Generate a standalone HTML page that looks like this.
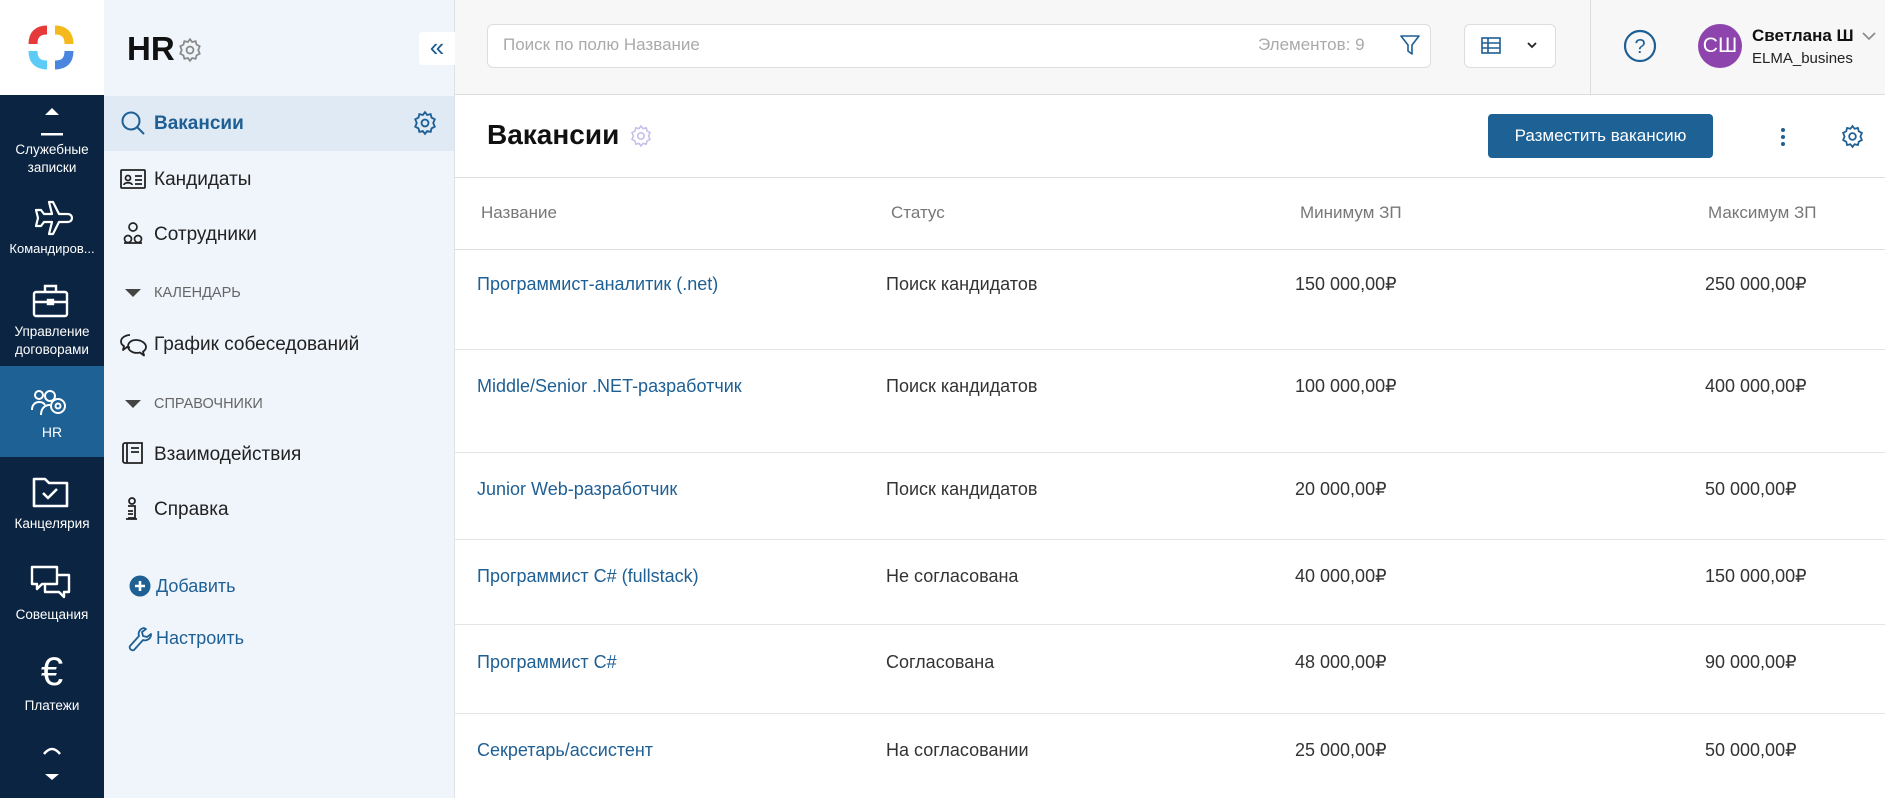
<!DOCTYPE html>
<html><head><meta charset="utf-8"><style>
*{margin:0;padding:0;box-sizing:border-box}
body{width:1885px;height:798px;overflow:hidden;font-family:"Liberation Sans",sans-serif;background:#fff;position:relative;color:#222}
.a{position:absolute;white-space:nowrap}
#rail{left:0;top:0;width:104px;height:798px;background:#0b2441}
#logo{left:0;top:0;width:104px;height:95px;background:#fff}
.ri{position:absolute;left:0;width:104px;text-align:center;color:#fff;font-size:13.5px;line-height:18px}
#side{left:104px;top:0;width:351px;height:798px;background:#f0f5fc;border-right:1px solid #dde2e8}
.nav{position:absolute;left:50px;font-size:19px;color:#222}
.sec{position:absolute;left:50px;font-size:14.5px;color:#666}
#top{left:455px;top:0;width:1430px;height:95px;background:#f7f7f7;border-bottom:1px solid #ddd}
.hl{position:absolute;left:455px;width:1430px;height:1px;background:#e4e4e4}
.cell{position:absolute;font-size:18px;color:#333;white-space:nowrap}
.lnk{color:#1e5f94}
.th{position:absolute;top:203px;font-size:17px;color:#777}
</style></head><body>
<div id="rail" class="a"></div>
<div id="logo" class="a">
<svg width="104" height="95" style="position:absolute;left:0;top:0" viewBox="0 0 104 95">
<g fill="none" stroke-width="9" stroke-linecap="butt">
<path d="M33 44 Q33 30 47 30" stroke="#e63a3a"/>
<path d="M55 30 Q69 30 69 44" stroke="#f6b91d"/>
<path d="M69 51 Q69 65 55 65" stroke="#4a86e0"/>
<path d="M47 65 Q33 65 33 51" stroke="#5ccbf5"/>
</g></svg></div>
<svg class="a" style="left:38px;top:103px" width="28" height="34" viewBox="0 0 28 34"><path d="M7 12 L14 5 L21 12Z" fill="#fff"/><rect x="3" y="30" width="22" height="2.5" fill="#fff"/></svg>
<div class="ri" style="top:141px">Служебные<br>записки</div>
<svg class="a" style="left:31px;top:200px" width="42" height="36" viewBox="0 0 42 36" fill="none" stroke="#fff" stroke-width="2.2" stroke-linejoin="round"><path d="M18 2h4l6 12h9a4 4 0 0 1 0 8h-9l-6 12h-4l3-12h-8l-3 4H5l2-8-2-8h5l3 4h8z"/></svg>
<div class="ri" style="top:240px;font-size:13px">Командиров...</div>
<svg class="a" style="left:32px;top:283px" width="40" height="36" viewBox="0 0 40 36" fill="none" stroke="#fff" stroke-width="2.4"><rect x="2" y="9" width="33" height="24" rx="2"/><path d="M13 9V3h11v6M2 19h33"/><rect x="16" y="17" width="5" height="4" fill="#fff"/></svg>
<div class="ri" style="top:323px">Управление<br>договорами</div>
<div class="a" style="left:0;top:366px;width:104px;height:91px;background:#1e6195"></div>
<svg class="a" style="left:31px;top:388px" width="40" height="30" viewBox="0 0 40 30" fill="none" stroke="#fff" stroke-width="2"><circle cx="8" cy="7" r="4"/><path d="M1 22c0-6 4-8 7-8s5 1 6 3"/><circle cx="19" cy="8" r="5"/><path d="M10 27c0-7 4-10 9-10"/><circle cx="27" cy="18" r="7"/><circle cx="27" cy="18" r="2.5"/></svg>
<div class="ri" style="top:423px;font-size:14px">HR</div>
<svg class="a" style="left:32px;top:476px" width="38" height="32" viewBox="0 0 38 32" fill="none" stroke="#fff" stroke-width="2.6" stroke-linejoin="round"><path d="M2 3h11l4 4h18v23H2z"/><path d="M11 17l5 5 9-9"/></svg>
<div class="ri" style="top:515px">Канцелярия</div>
<svg class="a" style="left:30px;top:565px" width="42" height="36" viewBox="0 0 42 36" fill="none" stroke="#fff" stroke-width="2.4" stroke-linejoin="round"><path d="M2 2h25v17H12l-5 5v-5H2z"/><path d="M27 10h12v17h-5v5l-5-5H15v-8"/></svg>
<div class="ri" style="top:606px">Совещания</div>
<div class="ri" style="top:652px;font-size:40px;line-height:40px;font-weight:300">€</div>
<div class="ri" style="top:697px">Платежи</div>
<svg class="a" style="left:38px;top:742px" width="28" height="40" viewBox="0 0 28 40"><path d="M6 12 Q14 2 22 12" fill="none" stroke="#fff" stroke-width="2.5"/><path d="M7 32h14l-7 6z" fill="#fff"/></svg>

<div id="side" class="a">
<div class="a" style="left:23px;top:30px;font-size:33px;font-weight:bold;color:#111">HR</div>
<svg class="a" style="left:73px;top:37px" width="26" height="26" viewBox="0 0 24 24" fill="none" stroke="#888" stroke-width="1.6"><circle cx="12" cy="12" r="3.2"/><path d="M12 2l2 2.6 3.2-.8.8 3.2L21 8.6 19.6 12 21 15.4l-3 1.6-.8 3.2-3.2-.8L12 22l-2-2.6-3.2.8-.8-3.2L3 15.4 4.4 12 3 8.6 6 7l.8-3.2 3.2.8z"/></svg>
<div class="a" style="left:315px;top:32px;width:36px;height:33px;background:#fff;border-radius:3px 0 0 3px;color:#1e5f94;font-size:26px;line-height:30px;text-align:center">«</div>
<div class="a" style="left:0;top:96px;width:350px;height:55px;background:#dfeaf5"></div>
<svg class="a" style="left:16px;top:110px" width="26" height="26" viewBox="0 0 26 26" fill="none" stroke="#1e5f94" stroke-width="2"><circle cx="11" cy="11" r="8.5"/><path d="M17 17l7 7"/></svg>
<div class="nav" style="top:113px;color:#1e5f94;font-weight:bold">Вакансии</div>
<svg class="a" style="left:308px;top:110px" width="26" height="26" viewBox="0 0 24 24" fill="none" stroke="#1e5f94" stroke-width="1.7"><circle cx="12" cy="12" r="3.2"/><path d="M12 2l2 2.6 3.2-.8.8 3.2L21 8.6 19.6 12 21 15.4l-3 1.6-.8 3.2-3.2-.8L12 22l-2-2.6-3.2.8-.8-3.2L3 15.4 4.4 12 3 8.6 6 7l.8-3.2 3.2.8z"/></svg>
<svg class="a" style="left:16px;top:169px" width="26" height="20" viewBox="0 0 26 20" fill="none" stroke="#222" stroke-width="1.8"><rect x="1" y="1" width="24" height="18" rx="1"/><circle cx="8" cy="9" r="2.5"/><path d="M4 16c0-3 8-3 8 0M15 7h7M15 11h7M15 15h7"/></svg>
<div class="nav" style="top:169px">Кандидаты</div>
<svg class="a" style="left:18px;top:222px" width="22" height="22" viewBox="0 0 22 22" fill="none" stroke="#222" stroke-width="1.7"><circle cx="11" cy="5" r="4"/><circle cx="6" cy="17" r="3.5"/><circle cx="16" cy="17" r="3.5"/><path d="M2 21h18"/></svg>
<div class="nav" style="top:224px">Сотрудники</div>
<div class="a" style="left:21px;top:289px;width:0;height:0;border-left:8px solid transparent;border-right:8px solid transparent;border-top:8px solid #444"></div>
<div class="sec" style="top:285px">КАЛЕНДАРЬ</div>
<svg class="a" style="left:16px;top:333px" width="27" height="24" viewBox="0 0 27 24" fill="none" stroke="#222" stroke-width="1.8" stroke-linejoin="round"><path d="M10 2C5 2 1 5 1 8.5c0 2 1 3.5 3 4.5l-1 4 4-3c1 .3 2 .4 3 .4"/><path d="M16 7c5 0 10 3 10 7 0 2-1 3.5-3 4.5l1 4-4-3c-1 .3-2 .4-3 .4-5 0-9-3-9-6.5S11 7 16 7z"/></svg>
<div class="nav" style="top:334px">График собеседований</div>
<div class="a" style="left:21px;top:400px;width:0;height:0;border-left:8px solid transparent;border-right:8px solid transparent;border-top:8px solid #444"></div>
<div class="sec" style="top:396px">СПРАВОЧНИКИ</div>
<svg class="a" style="left:17px;top:442px" width="24" height="24" viewBox="0 0 24 24" fill="none" stroke="#222" stroke-width="1.8"><path d="M2 3a2 2 0 0 1 2-2h17v20H4a2 2 0 0 1-2-2z"/><path d="M6 1v20M10 6h8M10 10h8"/></svg>
<div class="nav" style="top:444px">Взаимодействия</div>
<svg class="a" style="left:20px;top:497px" width="16" height="24" viewBox="0 0 16 24" fill="none" stroke="#222" stroke-width="1.8"><circle cx="8" cy="4" r="3"/><path d="M4 9h7v12H4M4 14h5M4 17h5M2 22h11"/></svg>
<div class="nav" style="top:499px">Справка</div>
<svg class="a" style="left:25px;top:575px" width="22" height="22" viewBox="0 0 22 22"><circle cx="11" cy="11" r="10.5" fill="#1e5f94"/><path d="M11 6v10M6 11h10" stroke="#fff" stroke-width="2.6"/></svg>
<div class="nav" style="left:52px;top:576px;color:#1e5f94;font-size:18px">Добавить</div>
<svg class="a" style="left:24px;top:626px" width="26" height="28" viewBox="0 0 26 28" fill="none" stroke="#1e5f94" stroke-width="1.8" stroke-linejoin="round"><path d="M16 2a6 6 0 0 0-5 8L2 20a3 3 0 0 0 4 4l9-10a6 6 0 0 0 8-6l-4 3-4-1-1-4 4-3z"/></svg>
<div class="nav" style="left:52px;top:628px;color:#1e5f94;font-size:18px">Настроить</div>
</div>

<div id="top" class="a"></div>
<div class="a" style="left:487px;top:24px;width:944px;height:44px;background:#fff;border:1px solid #ddd;border-radius:6px"></div>
<div class="a" style="left:503px;top:35px;font-size:17px;color:#aaa">Поиск по полю Название</div>
<div class="a" style="left:1258px;top:35px;font-size:17px;color:#aaa">Элементов: 9</div>
<svg class="a" style="left:1400px;top:34px" width="20" height="22" viewBox="0 0 20 22" fill="none" stroke="#1e5f94" stroke-width="1.6" stroke-linejoin="round"><path d="M1 2h18l-7 9v9l-4-3v-6z"/></svg>
<div class="a" style="left:1464px;top:24px;width:92px;height:44px;background:#fff;border:1px solid #ddd;border-radius:6px"></div>
<svg class="a" style="left:1481px;top:37px" width="20" height="17" viewBox="0 0 20 17" fill="none" stroke="#1e5f94" stroke-width="1.6"><rect x="1" y="1" width="18" height="15"/><path d="M1 6h18M1 11h18M7 1v15"/></svg>
<svg class="a" style="left:1526px;top:42px" width="12" height="8" viewBox="0 0 12 8" fill="none" stroke="#222" stroke-width="1.8"><path d="M2 1l4 4 4-4"/></svg>
<div class="a" style="left:1590px;top:0;width:1px;height:94px;background:#ddd"></div>
<svg class="a" style="left:1623px;top:29px" width="34" height="34" viewBox="0 0 34 34"><circle cx="17" cy="17" r="15" fill="none" stroke="#1e5f94" stroke-width="2.2"/><text x="17" y="24" text-anchor="middle" font-family="Liberation Sans" font-size="20" fill="#1e5f94">?</text></svg>
<div class="a" style="left:1698px;top:24px;width:44px;height:44px;border-radius:50%;background:#8e44ad;color:#fff;font-size:21px;line-height:44px;text-align:center">СШ</div>
<div class="a" style="left:1752px;top:26px;font-size:17px;font-weight:bold;color:#111">Светлана Ш</div>
<svg class="a" style="left:1862px;top:32px" width="14" height="9" viewBox="0 0 14 9" fill="none" stroke="#888" stroke-width="1.6"><path d="M1 1l6 6 6-6"/></svg>
<div class="a" style="left:1752px;top:50px;font-size:15px;color:#222">ELMA_busines</div>

<div class="a" style="left:487px;top:119px;font-size:28px;font-weight:bold;color:#111">Вакансии</div>
<svg class="a" style="left:629px;top:124px" width="24" height="24" viewBox="0 0 24 24" fill="none" stroke="#c4c0ea" stroke-width="1.6"><circle cx="12" cy="12" r="3.2"/><path d="M12 2l2 2.6 3.2-.8.8 3.2L21 8.6 19.6 12 21 15.4l-3 1.6-.8 3.2-3.2-.8L12 22l-2-2.6-3.2.8-.8-3.2L3 15.4 4.4 12 3 8.6 6 7l.8-3.2 3.2.8z"/></svg>
<div class="a" style="left:1488px;top:114px;width:225px;height:44px;background:#1e6195;border-radius:4px;color:#fff;font-size:17px;line-height:44px;text-align:center">Разместить вакансию</div>
<svg class="a" style="left:1780px;top:126px" width="6" height="22" viewBox="0 0 6 22" fill="#1e5f94"><circle cx="3" cy="4" r="2"/><circle cx="3" cy="11" r="2"/><circle cx="3" cy="18" r="2"/></svg>
<svg class="a" style="left:1840px;top:124px" width="25" height="25" viewBox="0 0 24 24" fill="none" stroke="#1e5f94" stroke-width="1.7"><circle cx="12" cy="12" r="3.2"/><path d="M12 2l2 2.6 3.2-.8.8 3.2L21 8.6 19.6 12 21 15.4l-3 1.6-.8 3.2-3.2-.8L12 22l-2-2.6-3.2.8-.8-3.2L3 15.4 4.4 12 3 8.6 6 7l.8-3.2 3.2.8z"/></svg>

<div class="hl" style="top:177px;background:#ddd"></div>
<div class="th" style="left:481px">Название</div>
<div class="th" style="left:891px">Статус</div>
<div class="th" style="left:1300px">Минимум ЗП</div>
<div class="th" style="left:1708px">Максимум ЗП</div>
<div class="hl" style="top:249px;background:#ddd"></div>

<div class="cell lnk" style="left:477px;top:274px">Программист-аналитик (.net)</div>
<div class="cell" style="left:886px;top:274px">Поиск кандидатов</div>
<div class="cell" style="left:1295px;top:274px">150 000,00₽</div>
<div class="cell" style="left:1705px;top:274px">250 000,00₽</div>
<div class="hl" style="top:349px"></div>
<div class="cell lnk" style="left:477px;top:376px">Middle/Senior .NET-разработчик</div>
<div class="cell" style="left:886px;top:376px">Поиск кандидатов</div>
<div class="cell" style="left:1295px;top:376px">100 000,00₽</div>
<div class="cell" style="left:1705px;top:376px">400 000,00₽</div>
<div class="hl" style="top:452px"></div>
<div class="cell lnk" style="left:477px;top:479px">Junior Web-разработчик</div>
<div class="cell" style="left:886px;top:479px">Поиск кандидатов</div>
<div class="cell" style="left:1295px;top:479px">20 000,00₽</div>
<div class="cell" style="left:1705px;top:479px">50 000,00₽</div>
<div class="hl" style="top:539px"></div>
<div class="cell lnk" style="left:477px;top:566px">Программист C# (fullstack)</div>
<div class="cell" style="left:886px;top:566px">Не согласована</div>
<div class="cell" style="left:1295px;top:566px">40 000,00₽</div>
<div class="cell" style="left:1705px;top:566px">150 000,00₽</div>
<div class="hl" style="top:624px"></div>
<div class="cell lnk" style="left:477px;top:652px">Программист C#</div>
<div class="cell" style="left:886px;top:652px">Согласована</div>
<div class="cell" style="left:1295px;top:652px">48 000,00₽</div>
<div class="cell" style="left:1705px;top:652px">90 000,00₽</div>
<div class="hl" style="top:713px"></div>
<div class="cell lnk" style="left:477px;top:740px">Секретарь/ассистент</div>
<div class="cell" style="left:886px;top:740px">На согласовании</div>
<div class="cell" style="left:1295px;top:740px">25 000,00₽</div>
<div class="cell" style="left:1705px;top:740px">50 000,00₽</div>
</body></html>
